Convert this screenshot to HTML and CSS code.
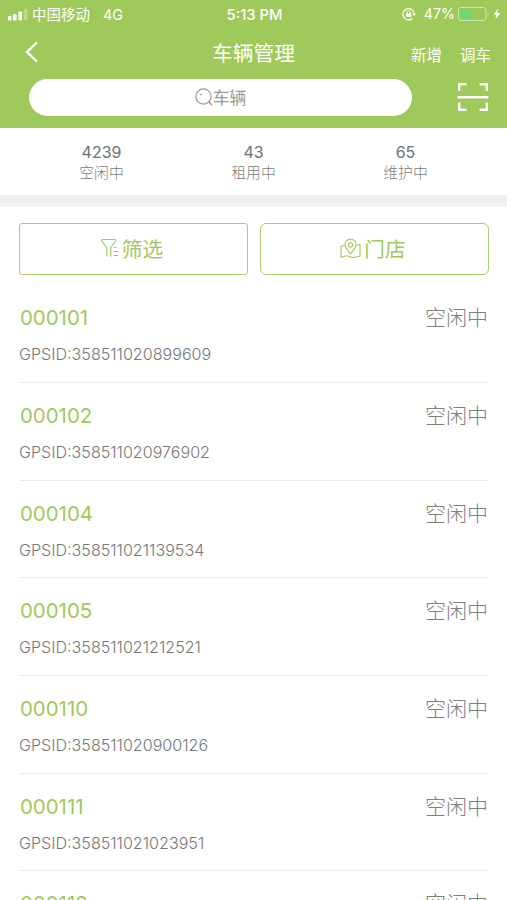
FILE: index.html
```
<!DOCTYPE html>
<html lang="zh-CN">
<head>
    <meta charset="UTF-8">
    <meta name="viewport" content="width=device-width, initial-scale=1.0">
    <title>车辆管理</title>
    <link rel="stylesheet" href="styles.css">
</head>
<body>
    <header class="header">
        <div class="status-bar">
            <div class="status-left">
                <svg class="signal" width="20" height="12" viewBox="0 0 20 12" fill="#fff">
                    <rect x="0" y="7" width="3.6" height="4.5" rx="1"/>
                    <rect x="5" y="5" width="3.6" height="6.5" rx="1"/>
                    <rect x="10.5" y="2.5" width="3.6" height="9" rx="1"/>
                    <rect x="15.8" y="0" width="3.6" height="11.5" rx="1" opacity="0.3"/>
                </svg>
                <span class="carrier">中国移动</span>
                <span class="network">4G</span>
            </div>
            <div class="status-time">5:13 PM</div>
            <div class="status-right">
                <svg width="14" height="14" viewBox="0 0 14 14" fill="none" stroke="#fff" stroke-width="1.2">
                    <path d="M10.3 11.5A5.6 5.6 0 1 1 12.2 7"/>
                    <path d="M10.2 6.7h3.8l-1.9 2.4z" fill="#fff" stroke="none"/>
                    <rect x="4" y="6.2" width="5.4" height="3.8" rx="0.6" fill="#fff" stroke="none"/>
                    <path d="M5.2 6.5V5.2a1.5 1.5 0 0 1 3 0v1.3" stroke-width="1"/>
                </svg>
                <span class="percent">47%</span>
                <svg class="battery" width="32" height="14" viewBox="0 0 32 14">
                    <rect x="0.5" y="0.5" width="27.5" height="13" rx="2.5" fill="none" stroke="#fff" stroke-opacity="0.5"/>
                    <rect x="2" y="2" width="12.5" height="10" rx="1" fill="#74d672"/>
                    <path d="M29.6 5v4c1.3-.8 1.3-3.2 0-4z" fill="#fff" opacity="0.5"/>
                </svg>
                <svg width="8" height="12" viewBox="0 0 8 12" fill="#fff">
                    <path d="M5 0.5L0.5 6.8h2.7L2.5 11.5L7.5 5H4.5z"/>
                </svg>
            </div>
        </div>
        <div class="nav-bar">
            <svg class="back" width="14" height="22" viewBox="0 0 14 22" fill="none" stroke="#fff" stroke-width="2.4">
                <path d="M12 1.3L2 11l10 9.7"/>
            </svg>
            <h1 class="title">车辆管理</h1>
            <div class="actions">
                <span>新增</span>
                <span>调车</span>
            </div>
        </div>
        <div class="search-row">
            <div class="search-box">
                <svg width="18" height="18" viewBox="0 0 18 18" fill="none" stroke="#999" stroke-width="1.2">
                    <circle cx="8.5" cy="8.5" r="7.6"/>
                    <path d="M13.5 13.5l3.5 3.7" stroke-width="1.5"/>
                    <circle cx="6.2" cy="6.5" r="0.9" fill="#999" stroke="none"/>
                </svg>
                <span>车辆</span>
            </div>
            <svg class="scan" width="32" height="30" viewBox="0 0 32 30" fill="none" stroke="#fff" stroke-width="2.4">
                <path d="M2.2 9V2.2h7.3M22.5 2.2h7.3V9M29.8 20.5v7.3h-7.3M9.5 27.8H2.2v-7.3"/>
                <path d="M0.5 15.2h31"/>
            </svg>
        </div>
    </header>

    <section class="stats">
        <div class="stat"><b>4239</b><span>空闲中</span></div>
        <div class="stat"><b>43</b><span>租用中</span></div>
        <div class="stat"><b>65</b><span>维护中</span></div>
    </section>

    <div class="filters">
        <div class="filter filter-left">
            <svg width="18" height="20" viewBox="0 0 18 20" fill="none" stroke="#9fc95a" stroke-width="1.1" stroke-linejoin="round">
                <path d="M5.8 18.5V9.5L1 3.5Q0 1.5 2 1.5h11.5q2 0 1 2L9.8 9.5v9.3"/>
                <path d="M12.5 9.5h3M12.5 13.5h4.5M12.5 17.5h4.5"/>
            </svg>
            <span>筛选</span>
        </div>
        <div class="filter filter-right">
            <svg width="21" height="21" viewBox="0 0 21 21" fill="none" stroke="#9fc95a" stroke-width="1.1" stroke-linejoin="round">
                <path d="M10.5 16C8 12.8 5 10 5 6.6a5.5 5.5 0 0 1 11 0C16 10 13 12.8 10.5 16z"/>
                <circle cx="10.5" cy="6.9" r="2.1"/>
                <path d="M4.3 7.5L1 8.3v11.2l4-1.5c4-1.2 6 2.5 10 1.3l5-1V6.5l-3.3 1"/>
            </svg>
            <span>门店</span>
        </div>
    </div>

    <ul class="list">
        <li class="item">
            <div class="item-top"><span class="number">000101</span><span class="state">空闲中</span></div>
            <p class="gps">GPSID:358511020899609</p>
        </li>
        <li class="item">
            <div class="item-top"><span class="number">000102</span><span class="state">空闲中</span></div>
            <p class="gps">GPSID:358511020976902</p>
        </li>
        <li class="item">
            <div class="item-top"><span class="number">000104</span><span class="state">空闲中</span></div>
            <p class="gps">GPSID:358511021139534</p>
        </li>
        <li class="item">
            <div class="item-top"><span class="number">000105</span><span class="state">空闲中</span></div>
            <p class="gps">GPSID:358511021212521</p>
        </li>
        <li class="item">
            <div class="item-top"><span class="number">000110</span><span class="state">空闲中</span></div>
            <p class="gps">GPSID:358511020900126</p>
        </li>
        <li class="item">
            <div class="item-top"><span class="number">000111</span><span class="state">空闲中</span></div>
            <p class="gps">GPSID:358511021023951</p>
        </li>
        <li class="item">
            <div class="item-top"><span class="number">000112</span><span class="state">空闲中</span></div>
        </li>
    </ul>
</body>
</html>
```
FILE: styles.css
```
* {
    box-sizing: border-box;
}
body {
    font-family: Inter, "Noto Sans CJK SC", sans-serif;
    background-color: #fff;
    margin: 0;
    height: 900px;
    overflow: hidden;
}
svg {
    display: block;
    flex: none;
}
.header {
    height: 128px;
    background-color: #9fc95a;
    color: #fff;
}
.status-bar {
    display: grid;
    grid-template-columns: 1fr auto 1fr;
    align-items: center;
    height: 28px;
    padding: 0 6px 0 8px;
    font-size: 14.5px;
    line-height: 28px;
}
.status-left,
.status-right {
    display: flex;
    align-items: center;
}
.status-right {
    justify-content: flex-end;
    padding-bottom: 1px;
}
.carrier {
    margin-left: 4px;
}
.network {
    margin-left: 13px;
}
.status-time {
    font-weight: 500;
    font-size: 14.8px;
}
.percent {
    margin: 0 3px 0 8px;
    font-size: 14.2px;
}
.battery {
    margin-right: 3px;
}
.nav-bar {
    display: grid;
    grid-template-columns: 1fr auto 1fr;
    align-items: center;
    height: 48px;
    padding: 0 16px 0 25px;
}
.title {
    margin: 0 9px 0 0;
    font-size: 20.7px;
    font-weight: 400;
}
.actions {
    display: flex;
    justify-content: flex-end;
    gap: 18px;
    padding-top: 3px;
    font-size: 15.5px;
}
.search-row {
    display: flex;
    align-items: center;
    justify-content: space-between;
    padding: 3px 18px 0 29px;
}
.search-box {
    display: flex;
    align-items: center;
    justify-content: center;
    width: 383px;
    height: 37px;
    padding-bottom: 1px;
    border-radius: 19px;
    background-color: #fff;
    color: #999;
    font-size: 16.8px;
}
.search-box span {
    padding-bottom: 1px;
}
.scan {
    margin-bottom: 1px;
}
.stats {
    display: flex;
    height: 79px;
    padding: 14px 25.5px 0;
    border-bottom: 12px solid #f0f0f0;
}
.stat {
    flex: 1;
    text-align: center;
    line-height: 21px;
}
.stat b {
    display: block;
    font-size: 16px;
    font-weight: 400;
    color: #707070;
}
.stat span {
    display: block;
    font-size: 14.8px;
    font-weight: 300;
    color: #808080;
}
.filters {
    display: flex;
    gap: 12px;
    padding: 16px 18px 0 19px;
}
.filter {
    flex: 1;
    display: flex;
    align-items: center;
    justify-content: center;
    gap: 3px;
    height: 52px;
    padding: 0 3px 2px 0;
    border: 1.5px solid #a9cf6c;
    border-radius: 3px;
    color: #9fc95a;
    font-size: 20.7px;
}
.filter-right {
    border-radius: 6px;
}
.list {
    list-style: none;
    margin: 0;
    padding: 10.3px 18px 0 19px;
}
.item {
    height: 97.7px;
    padding-top: 18px;
    border-bottom: 1px solid #ebebeb;
}
.item-top {
    display: flex;
    justify-content: space-between;
    height: 30px;
    line-height: 30px;
    font-size: 20.7px;
}
.number {
    padding-left: 1px;
    color: #9fc95a;
    font-size: 20.4px;
}
.state {
    margin-right: 1px;
    color: #808080;
    font-weight: 300;
    font-size: 21px;
}
.gps {
    margin: 11px 0 0;
    font-size: 16.1px;
    line-height: 20px;
    font-weight: 300;
    color: #777;
}
```
